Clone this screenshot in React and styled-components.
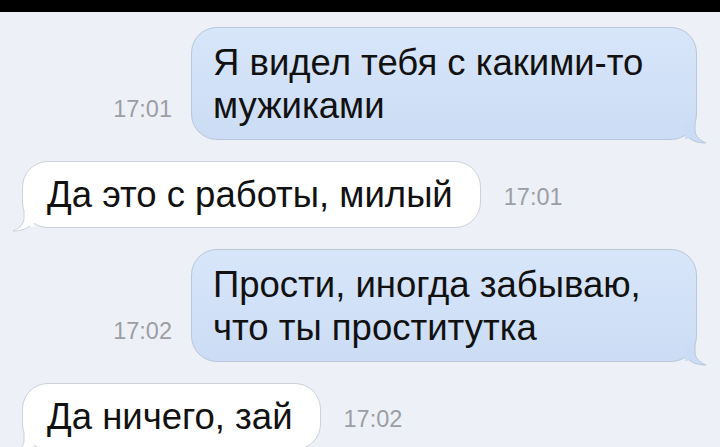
import React from "react";
import styled, { createGlobalStyle, css } from "styled-components";

const Global = createGlobalStyle`
  html, body { margin: 0; padding: 0; }
  body {
    width: 720px;
    height: 447px;
    overflow: hidden;
    background: #edf1f7;
    font-family: "Liberation Sans", Arial, sans-serif;
  }
`;

const Screen = styled.div`
  width: 720px;
  height: 447px;
  display: flex;
  flex-direction: column;
  background: #edf1f7;
`;

const TopBar = styled.div`
  height: 12px;
  flex: none;
  background: #000;
`;

const Thread = styled.div`
  display: flex;
  flex-direction: column;
  gap: 21px;
  padding: 15px 23px 0 22px;
`;

const Row = styled.div`
  display: flex;
  align-items: flex-end;
  justify-content: flex-end;
  flex-direction: ${(p) => (p.$out ? "row" : "row-reverse")};
  gap: ${(p) => (p.$out ? "19px" : "23px")};
`;

const Time = styled.span`
  font-size: 23.5px;
  line-height: 23.5px;
  color: #9c9ea3;
  margin-bottom: 19px;
`;

const Bubble = styled.div`
  position: relative;
  box-sizing: border-box;
  font-size: 36.5px;
  line-height: 43px;
  color: #111;
  border-radius: 26px;
  ${(p) =>
    p.$out
      ? css`
          width: 506px;
          padding: 13px 18px 12px 21px;
          background: linear-gradient(#d8e6fa, #cbdcf4);
          border: 1px solid #b8c7da;
        `
      : css`
          padding: 11px 27px 11px 24px;
          background: #ffffff;
          border: 1px solid #cdd2d9;
        `}
`;

const Tail = styled.svg`
  position: absolute;
  bottom: -5px;
  width: 22px;
  height: 22px;
  ${(p) =>
    p.$out
      ? css`
          right: -11px;
        `
      : css`
          left: -11px;
          transform: scaleX(-1);
        `}
`;

function BubbleTail({ out }) {
  const fill = out ? "#cbdcf4" : "#ffffff";
  const stroke = out ? "#b8c7da" : "#cdd2d9";
  return (
    <Tail $out={out} viewBox="0 0 22 22">
      <path d="M0 0 L10 0 L10 8 C10 14 14 18 21 21 C13 21 8 19 4 16 C2 17 1 17 0 17 Z" fill={fill} />
      <path d="M10 0 L10 8 C10 14 14 18 21 21 C13 21 8 19 4 16" fill="none" stroke={stroke} strokeWidth="1" />
    </Tail>
  );
}

const Lines = styled.span`
  position: relative;
  z-index: 1;
  white-space: nowrap;
`;

function Message({ out, time, children }) {
  return (
    <Row $out={out}>
      <Time>{time}</Time>
      <Bubble $out={out}>
        <Lines>{children}</Lines>
        <BubbleTail out={out} />
      </Bubble>
    </Row>
  );
}

export default function App() {
  return (
    <Screen>
      <Global />
      <TopBar />
      <Thread>
        <Message out time="17:01">
          Я видел тебя с какими-то
          <br />
          мужиками
        </Message>
        <Message time="17:01">Да это с работы, милый</Message>
        <Message out time="17:02">
          Прости, иногда забываю,
          <br />
          что ты проститутка
        </Message>
        <Message time="17:02">Да ничего, зай</Message>
      </Thread>
    </Screen>
  );
}
